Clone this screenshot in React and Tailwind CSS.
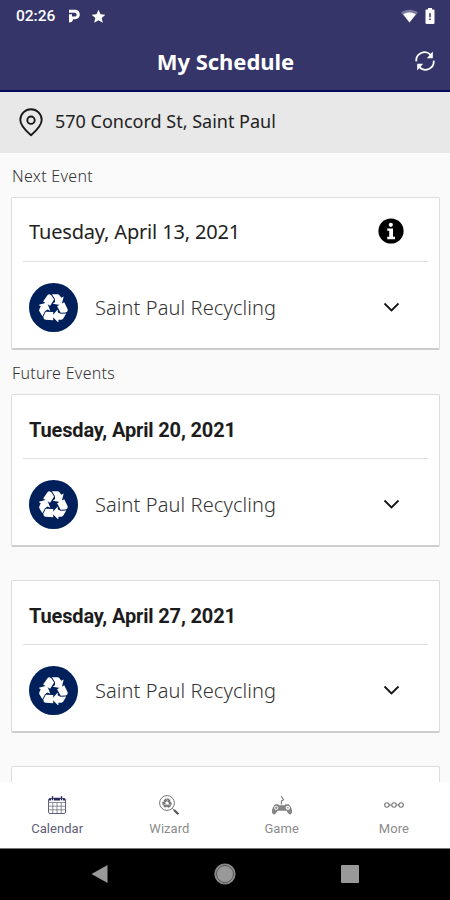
import { useState } from "react";

const events = [
  { id: 1, date: "Tuesday, April 20, 2021", service: "Saint Paul Recycling" },
  { id: 2, date: "Tuesday, April 27, 2021", service: "Saint Paul Recycling" },
];

const StatusBar = () => (
  <div className="flex h-8 items-center justify-between pl-4 pr-[15px] text-white">
    <div className="flex items-center">
      <span className="w-[40px] whitespace-nowrap font-['Roboto',sans-serif] text-[15.5px] font-medium leading-8">02:26</span>
      <svg className="ml-3 h-[14px] w-[12px]" viewBox="0 0 12 14">
        <path d="M1 .8h6c6.4 0 6.4 9.4 0 9.4H5c0 2-1.5 3.3-4 3.3V5.2h3v2.4h2.8c2.4 0 2.4-3.8 0-3.8H1z" fill="currentColor" />
      </svg>
      <svg className="ml-[11px] h-[15px] w-[15px]" viewBox="0 0 24 24" fill="currentColor">
        <path d="M12 1l3.2 7.2 7.8.8-5.9 5.2 1.8 7.8L12 18l-6.9 4 1.8-7.8L1 9l7.8-.8z" />
      </svg>
    </div>
    <div className="flex items-center gap-[7px]">
      <svg className="h-[14px] w-[17px]" viewBox="0 0 17 14" fill="currentColor">
        <path d="M0 3.5C5-.3 12-.3 17 3.5L8.5 13.5z" opacity=".35" />
        <path d="M2.2 5.2C6 3 11 3 14.8 5.2L8.5 13.5z" />
      </svg>
      <svg className="h-4 w-[10px]" viewBox="0 0 10 16">
        <path d="M3 0h4v1.6h1.5c.7 0 1 .4 1 1v12.2c0 .7-.3 1.1-1 1.1h-7c-.7 0-1-.4-1-1.1V2.6c0-.6.3-1 1-1H3z" fill="currentColor" />
        <path d="M4.2 5.3h1.6v4H4.2zM4.2 10.4h1.6V12H4.2z" fill="#35356a" />
      </svg>
    </div>
  </div>
);

const Header = () => (
  <div className="grid h-[60px] grid-cols-[50px_1fr_50px] items-center border-b-2 border-[#08085a] text-white">
    <span />
    <h1 className="pl-px text-center font-['Noto_Sans',sans-serif] text-[22px] font-bold leading-[58px] tracking-[-0.05px]">My Schedule</h1>
    <button className="flex justify-center">
      <svg className="h-[22px] w-[22px]" viewBox="0 0 22 22" fill="none" stroke="currentColor" strokeWidth="1.8">
        <path d="M2.3 11.4A8.3 8.3 0 0 1 16.6 4.9" />
        <path d="M19.7 10.6A8.3 8.3 0 0 1 5.4 17.1" />
        <path d="M18.8 1.6v6.6h-6z" fill="currentColor" stroke="none" />
        <path d="M3.2 20.4v-6.6h6z" fill="currentColor" stroke="none" />
      </svg>
    </button>
  </div>
);

const AddressBar = () => (
  <div className="flex h-[61px] items-center bg-[#e8e8e8] pl-[19px]">
    <svg className="h-[29px] w-[24px]" viewBox="0 0 24 29" fill="none" stroke="#1b1b1b" strokeWidth="1.9" strokeLinejoin="round">
      <path d="M12 27.2C7.6 23.4 1.3 17.8 1.3 11.9a10.7 10.7 0 0 1 21.4 0c0 5.9-6.3 11.5-10.7 15.3z" />
      <circle cx="12" cy="12.2" r="3.7" />
    </svg>
    <span className="ml-3 pb-[2px] font-['Noto_Sans',sans-serif] text-[18px] text-[#222]">570 Concord St, Saint Paul</span>
  </div>
);

// one folded arrow, turned three times round the centre
const RecycleArrow = ({ angle }) => (
  <g transform={`rotate(${angle})`}>
    <path d="M-10.4-6.4L-6.2-12.6Q-5-14-3.6-13.6L-2.2-12.8.6-8.6-3.4-2.2z" />
    <path d="M-1.6-13.8H4Q5.4-13.8 6.2-12.6L7.8-10.2 10.2-11.6 8-2.8-.8-4.2 1.6-6 1.4-9z" />
  </g>
);

const RecycleIcon = () => (
  <svg className="h-[29px] w-[29px]" viewBox="-14.5 -15 29 29" fill="#fff">
    <RecycleArrow angle={0} />
    <RecycleArrow angle={120} />
    <RecycleArrow angle={240} />
  </svg>
);

const InfoIcon = () => (
  <svg className="mt-[3px] h-[26px] w-[26px]" viewBox="0 0 26 26">
    <circle cx="13" cy="13" r="12.6" fill="#000" />
    <circle cx="12.8" cy="6.8" r="2.1" fill="#fff" />
    <path d="M9.2 10.4h5.8v8.4h2v2.4H9.2v-2.4h2v-6h-2z" fill="#fff" />
  </svg>
);

const EventCard = ({ date, service, next }) => {
  const [open, setOpen] = useState(false);

  return (
    <div className="h-[153px] shrink-0 rounded-[2px] border border-b-2 border-[#dcdcdc] border-b-[#cdcdcd] bg-white px-[11px]">
      <div className="flex h-[64px] items-center justify-between border-b-[1.5px] border-[#dedede] pl-[6px] pr-[24px]">
        {next ? (
          <span className="pt-1 font-['Noto_Sans',sans-serif] text-[20px] tracking-[-0.17px] text-[#222]">{date}</span>
        ) : (
          <span className="pt-[6px] font-['Roboto',sans-serif] text-[20px] font-bold tracking-[-0.15px] text-[#1c1c1c]">{date}</span>
        )}
        {next && <InfoIcon />}
      </div>
      <div className="flex h-[90px] items-center pl-[6px] pr-[28px]">
        <div className="flex h-[49px] w-[49px] items-center justify-center rounded-full bg-[#00205b]">
          <RecycleIcon />
        </div>
        <span className="ml-[17px] flex-1 pt-px font-['Noto_Sans',sans-serif] text-[20px] font-light tracking-[0.1px] text-[#333]">{service}</span>
        <button onClick={() => setOpen(!open)}>
          <svg className="h-[10px] w-[17px]" viewBox="0 0 17 10" fill="none" stroke="#151515" strokeWidth="1.8">
            <path d="M1.5 1.5l7 7 7-7" />
          </svg>
        </button>
      </div>
    </div>
  );
};

const CalendarIcon = () => (
  <svg className="h-[20px] w-[20px]" viewBox="0 0 20 20" fill="none" stroke="#606078" strokeWidth="1">
    <rect x="1.5" y="3.5" width="17" height="15" rx="1.5" />
    <path d="M7 2.7h6v2.8H7zM2 3.5h2v2H2zM16 3.5h2v2h-2z" fill="#29295d" stroke="none" />
    <path d="M5.5 1.2v4M14.5 1.2v4" stroke="#29295d" strokeWidth="1.5" />
    <path d="M1.5 7.5h17M1.5 11.2h17M1.5 14.8h17M5.8 7.5v11M10 7.5v11M14.2 7.5v11" strokeWidth=".7" />
  </svg>
);

const WizardIcon = () => (
  <svg className="h-[20px] w-[20px]" viewBox="0 0 20 20" fill="none" stroke="#777" strokeWidth="1">
    <circle cx="8" cy="8" r="7.4" />
    <g transform="translate(8 8.2) scale(.34)" fill="#777" stroke="none">
      <RecycleArrow angle={0} />
      <RecycleArrow angle={120} />
      <RecycleArrow angle={240} />
    </g>
    <path d="M13.3 13.3l2 2" />
    <path d="M15 15l4.4 4.2" stroke="#555" strokeWidth="2.2" />
  </svg>
);

const GameIcon = () => (
  <svg className="h-[20px] w-[20px]" viewBox="0 0 20 20" fill="none">
    <path d="M9.4 9.6V6l2.2-1.3L9.2 1" stroke="#777" strokeWidth="1.1" />
    <path d="M3.3 9.8h3l1.2 1h5l1.2-1h3c1.7 1.5 2.9 4.5 3 7 0 2.8-2.7 2.6-3.7.6l-1.2-2.2H5.2l-1.2 2.2c-1 2-3.7 2.2-3.7-.6.1-2.5 1.3-5.5 3-7z" fill="#888" stroke="#666" strokeWidth=".7" />
    <circle cx="4.2" cy="12.8" r="2.1" fill="#fff" />
    <path d="M2.7 12.8h3M4.2 11.3v3" stroke="#777" strokeWidth=".8" />
    <circle cx="15.8" cy="12.8" r="2.1" fill="#fff" />
    <circle cx="15.8" cy="12.8" r=".7" fill="#777" />
  </svg>
);

const MoreIcon = () => (
  <svg className="h-[20px] w-[20px]" viewBox="0 0 20 20" fill="none" stroke="#777" strokeWidth="1.1">
    <circle cx="2.9" cy="10" r="2.2" />
    <circle cx="10" cy="10" r="2.2" />
    <circle cx="17.1" cy="10" r="2.2" />
    <path d="M5.1 10h2.7M12.2 10h2.7" />
  </svg>
);

const tabs = [
  { name: "Calendar", icon: CalendarIcon },
  { name: "Wizard", icon: WizardIcon },
  { name: "Game", icon: GameIcon },
  { name: "More", icon: MoreIcon },
];

const TabBar = () => {
  const [active, setActive] = useState("Calendar");

  return (
    <nav className="grid h-[66px] shrink-0 grid-cols-4 bg-white pl-px">
      {tabs.map(({ name, icon: Icon }) => (
        <button key={name} onClick={() => setActive(name)} className="flex flex-col items-center pt-[13px]">
          <Icon />
          <span className={`mt-[5px] font-['Roboto',sans-serif] text-[13px] leading-[18px] tracking-[0.05px] ${active === name ? "text-[#606078]" : "text-[#8c8c8c]"}`}>{name}</span>
        </button>
      ))}
    </nav>
  );
};

const SystemNav = () => (
  <div className="flex h-[52px] shrink-0 items-center justify-between border-t border-[#777] bg-black px-[91px] pb-px">
    <svg className="h-[18px] w-[17px]" viewBox="0 0 17 18" fill="#999">
      <path d="M16.5 0v18L.5 9z" />
    </svg>
    <svg className="h-[22px] w-[22px]" viewBox="0 0 22 22">
      <circle cx="11" cy="11" r="10" fill="#999" stroke="#8a8a8a" strokeWidth="1.2" />
      <circle cx="11" cy="11" r="8.5" fill="none" stroke="#555" strokeWidth="1" />
    </svg>
    <div className="h-[18px] w-[18px] rounded-[1px] bg-[#999]" />
  </div>
);

const App = () => {
  const [next] = useState({ date: "Tuesday, April 13, 2021", service: "Saint Paul Recycling" });

  return (
    <div className="flex h-[900px] w-[450px] flex-col overflow-hidden bg-[#fafafa]">
      <header className="shrink-0 bg-[#35356a]">
        <StatusBar />
        <Header />
        <AddressBar />
      </header>

      <main className="flex min-h-0 flex-1 flex-col overflow-hidden pl-[11px] pr-[10px]">
        <h2 className="h-[44px] shrink-0 pl-px pt-[11px] font-['Noto_Sans',sans-serif] text-[16px] font-light leading-[24px] tracking-[0.3px] text-[#333]">Next Event</h2>
        <EventCard {...next} next />
        <h2 className="h-[44px] shrink-0 pl-px pt-[11px] font-['Noto_Sans',sans-serif] text-[16px] font-light leading-[24px] tracking-[0.3px] text-[#333]">Future Events</h2>
        <div className="flex flex-col gap-[33px]">
          {events.map((event) => (
            <EventCard key={event.id} date={event.date} service={event.service} />
          ))}
          {/* top edge of the card that is still below the fold */}
          <div className="h-[20px] rounded-t-[2px] border border-b-0 border-[#dcdcdc] bg-white" />
        </div>
      </main>

      <TabBar />
      <SystemNav />
    </div>
  );
};

export default App;
